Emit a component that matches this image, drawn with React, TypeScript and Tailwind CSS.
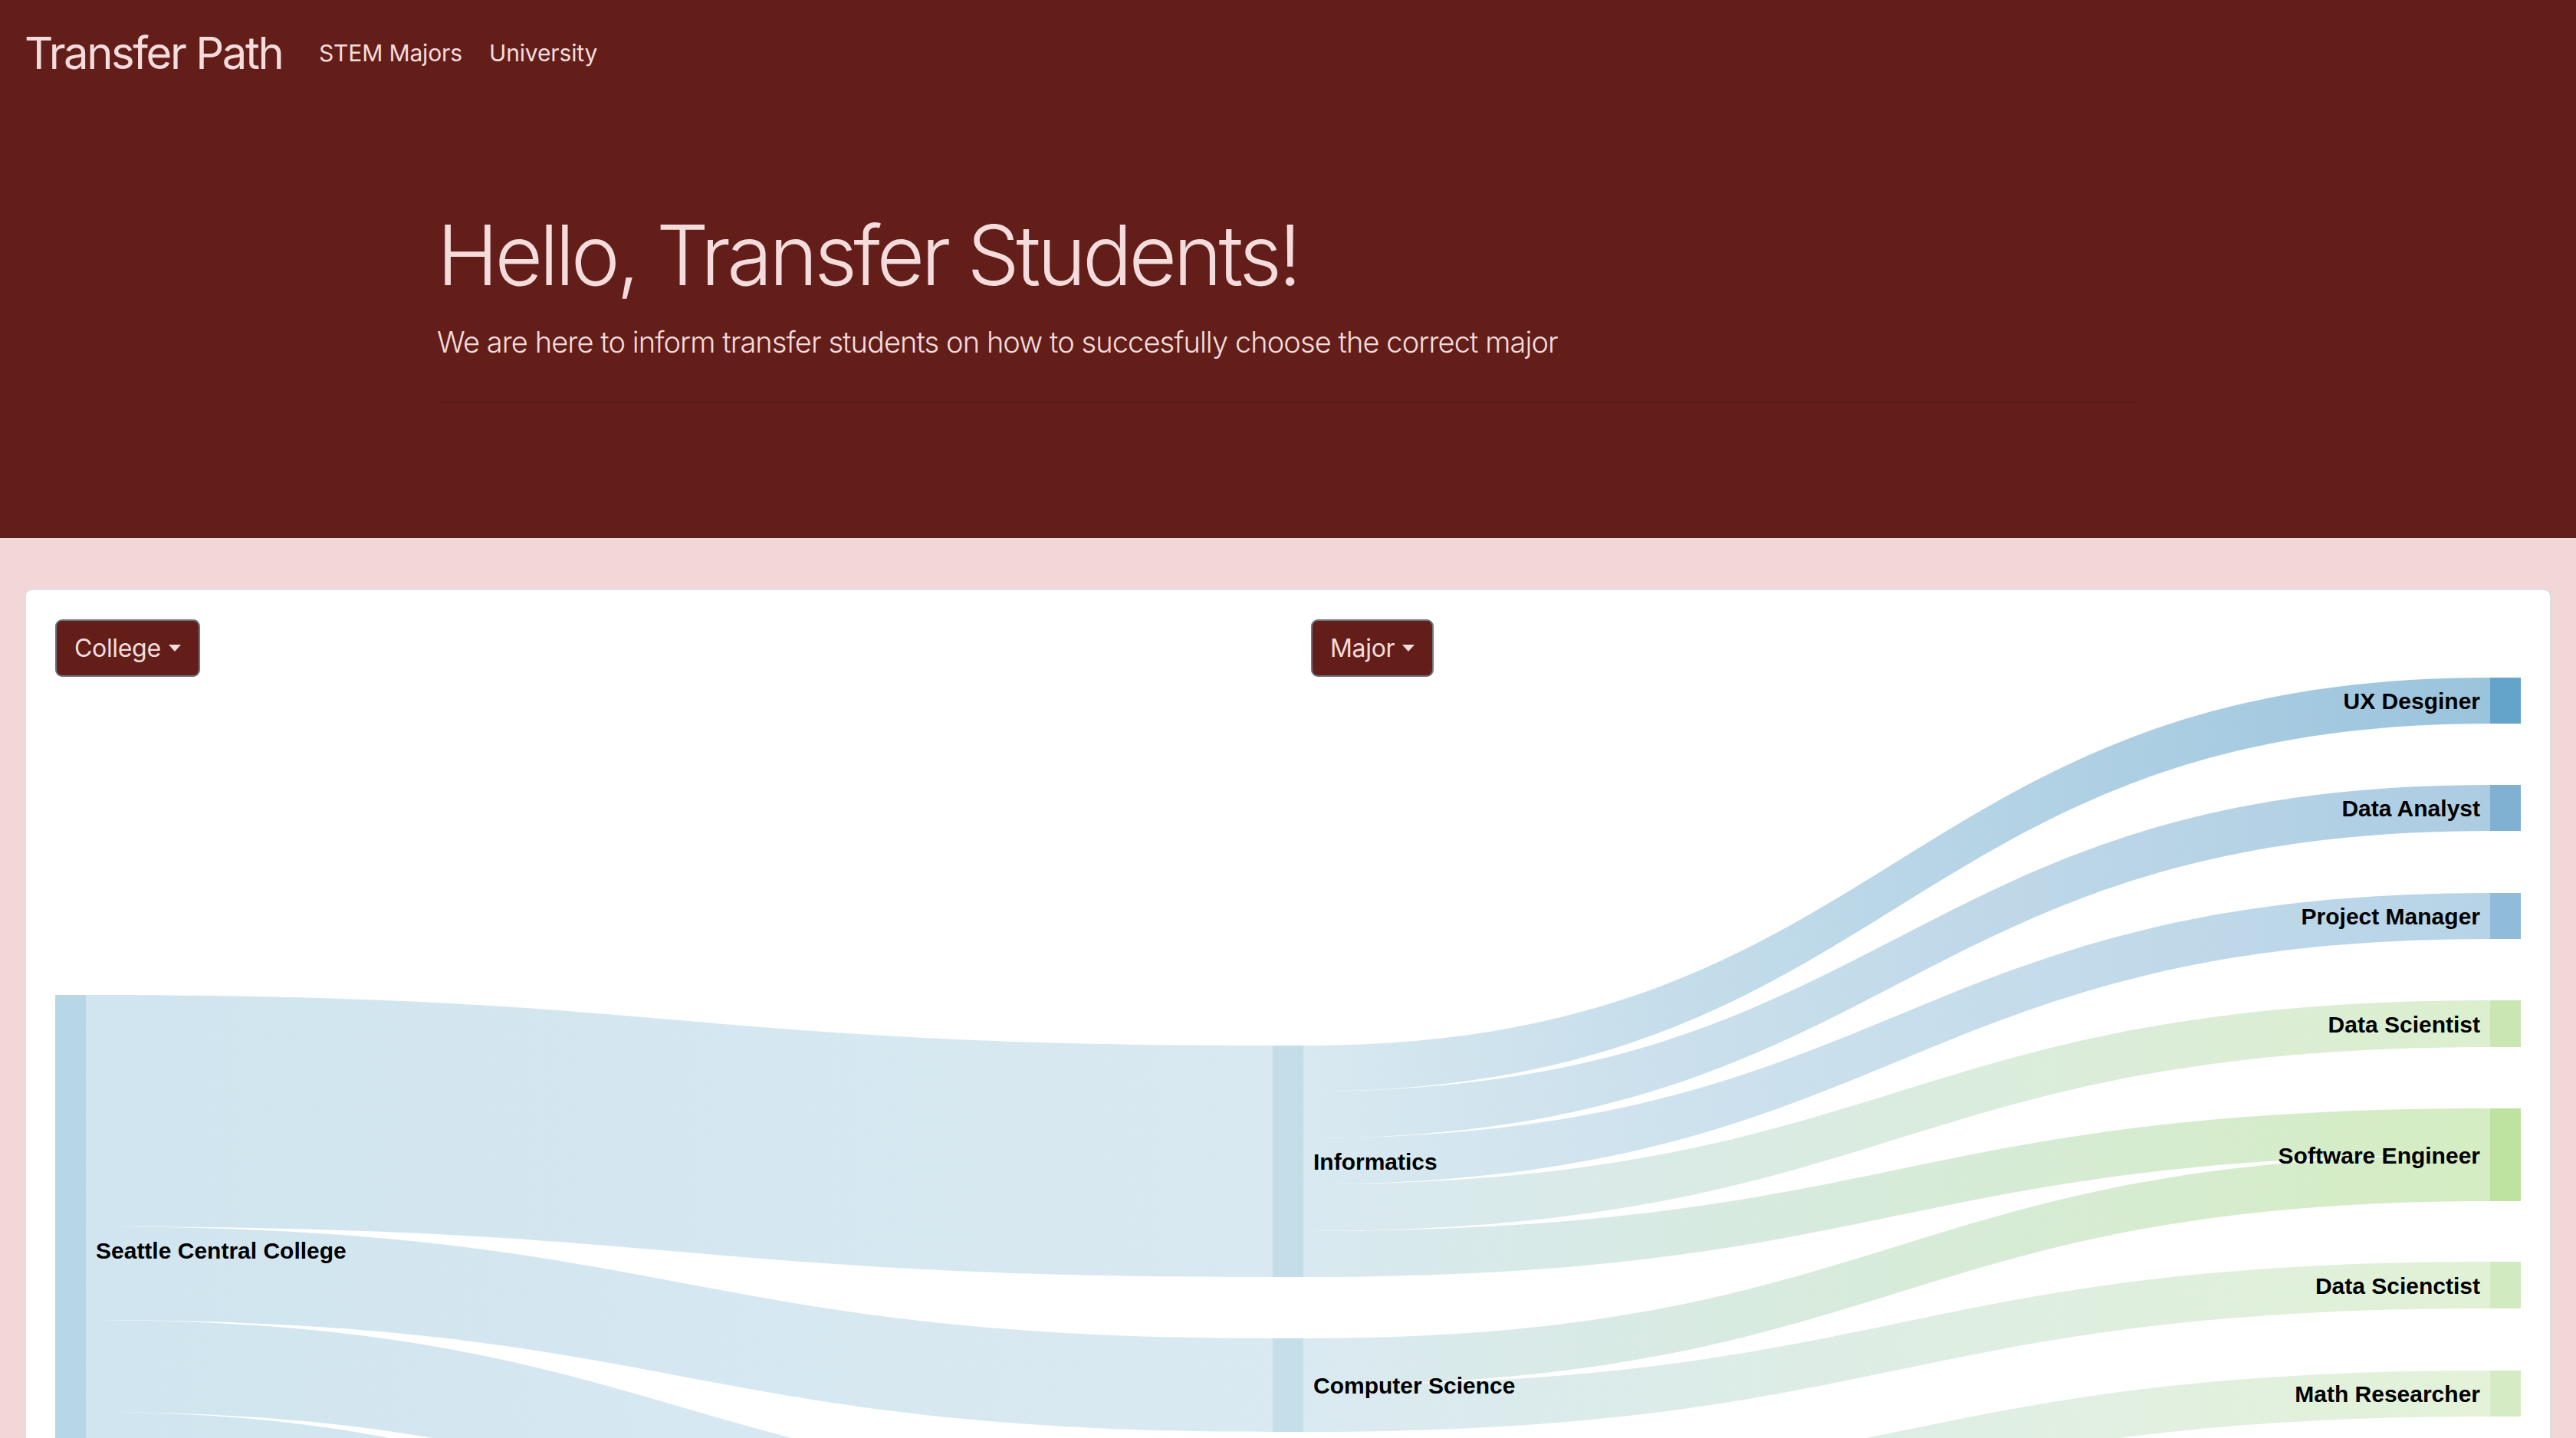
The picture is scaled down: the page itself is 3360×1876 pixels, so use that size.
import React from "react";

type Node = { id: string; x: number; y0: number; y1: number; color: string; label: string; side: "l" | "m" | "r" };
type Link = { s: string; t: string; a0: number; a1: number; b0: number; b1: number };

const OX = 72;
const OY = 883;
const NW = 40;
const XL = 72;
const XM = 1660;
const XR = 3248;

const nodes: Node[] = [
  { id: "sc", x: XL, y0: 1298, y1: 1964, color: "#b7d7e7", label: "Seattle Central College", side: "l" },
  { id: "inf", x: XM, y0: 1364, y1: 1666, color: "#c4dde9", label: "Informatics", side: "m" },
  { id: "cs", x: XM, y0: 1746, y1: 1868, color: "#c6deea", label: "Computer Science", side: "m" },
  { id: "math", x: XM, y0: 1948, y1: 2068, color: "#c9e0ec", label: "", side: "m" },
  { id: "eng", x: XM, y0: 2148, y1: 2270, color: "#c9e0ec", label: "", side: "m" },
  { id: "ux", x: XR, y0: 884, y1: 944, color: "#64a4cb", label: "UX Desginer", side: "r" },
  { id: "da", x: XR, y0: 1024, y1: 1084, color: "#80b1d3", label: "Data Analyst", side: "r" },
  { id: "pm", x: XR, y0: 1165, y1: 1225, color: "#90bcda", label: "Project Manager", side: "r" },
  { id: "ds", x: XR, y0: 1305, y1: 1366, color: "#c9e6b3", label: "Data Scientist", side: "r" },
  { id: "se", x: XR, y0: 1446, y1: 1567, color: "#bee3a1", label: "Software Engineer", side: "r" },
  { id: "dsc", x: XR, y0: 1646, y1: 1707, color: "#d1eabf", label: "Data Scienctist", side: "r" },
  { id: "mr", x: XR, y0: 1788, y1: 1848, color: "#d4ebc3", label: "Math Researcher", side: "r" },
  { id: "st", x: XR, y0: 1928, y1: 1988, color: "#d7edc8", label: "", side: "r" },
  { id: "me", x: XR, y0: 2068, y1: 2190, color: "#d9eecb", label: "", side: "r" },
];

const links: Link[] = [
  { s: "sc", t: "inf", a0: 1298, a1: 1600, b0: 1364, b1: 1666 },
  { s: "sc", t: "cs", a0: 1600, a1: 1722, b0: 1746, b1: 1868 },
  { s: "sc", t: "math", a0: 1722, a1: 1842, b0: 1948, b1: 2068 },
  { s: "sc", t: "eng", a0: 1842, a1: 1964, b0: 2148, b1: 2270 },
  { s: "inf", t: "ux", a0: 1364, a1: 1424, b0: 884, b1: 944 },
  { s: "inf", t: "da", a0: 1424, a1: 1485, b0: 1024, b1: 1084 },
  { s: "inf", t: "pm", a0: 1485, a1: 1545, b0: 1165, b1: 1225 },
  { s: "inf", t: "ds", a0: 1545, a1: 1606, b0: 1305, b1: 1366 },
  { s: "inf", t: "se", a0: 1606, a1: 1666, b0: 1446, b1: 1506 },
  { s: "cs", t: "se", a0: 1746, a1: 1807, b0: 1506, b1: 1567 },
  { s: "cs", t: "dsc", a0: 1807, a1: 1868, b0: 1646, b1: 1707 },
  { s: "math", t: "mr", a0: 1948, a1: 2008, b0: 1788, b1: 1848 },
  { s: "math", t: "st", a0: 2008, a1: 2068, b0: 1928, b1: 1988 },
  { s: "eng", t: "me", a0: 2148, a1: 2270, b0: 2068, b1: 2190 },
];

const byId = (id: string) => nodes.find((n) => n.id === id)!;

function linkPath(l: Link) {
  const s = byId(l.s);
  const t = byId(l.t);
  const x0 = s.x + NW - OX;
  const x1 = t.x - OX;
  const xm = (x0 + x1) / 2;
  const a0 = l.a0 - OY;
  const a1 = l.a1 - OY;
  const b0 = l.b0 - OY;
  const b1 = l.b1 - OY;
  return `M${x0},${a0} C${xm},${a0} ${xm},${b0} ${x1},${b0} L${x1},${b1} C${xm},${b1} ${xm},${a1} ${x0},${a1} Z`;
}

function Sankey() {
  return (
    <svg width={3216} height={1420} viewBox="0 0 3216 1420" className="block">
      <defs>
        {links.map((l, i) => {
          const s = byId(l.s);
          const t = byId(l.t);
          return (
            <linearGradient
              key={i}
              id={`g${i}`}
              gradientUnits="userSpaceOnUse"
              x1={s.x + NW - OX}
              y1={0}
              x2={t.x - OX}
              y2={0}
            >
              <stop offset="0%" stopColor={s.color} />
              <stop offset="100%" stopColor={t.color} />
            </linearGradient>
          );
        })}
      </defs>
      {links.map((l, i) => (
        <path key={i} d={linkPath(l)} fill={`url(#g${i})`} fillOpacity={0.65} />
      ))}
      {nodes.map((n) => (
        <rect key={n.id} x={n.x - OX} y={n.y0 - OY} width={NW} height={n.y1 - n.y0} fill={n.color} />
      ))}
      {nodes
        .filter((n) => n.label)
        .map((n) => {
          const cy = (n.y0 + n.y1) / 2 - OY + 11;
          const x = n.side === "r" ? n.x - OX - 13 : n.x - OX + NW + 13;
          return (
            <text
              key={n.id + "t"}
              x={x}
              y={cy}
              textAnchor={n.side === "r" ? "end" : "start"}
              fontFamily="'Liberation Sans', Arial, sans-serif"
              fontWeight={700}
              fontSize={30}
              fill="#000"
            >
              {n.label}
            </text>
          );
        })}
    </svg>
  );
}

function DropButton({ label }: { label: string }) {
  return (
    <button className="flex h-[75px] items-center rounded-[9px] border-2 border-[#6c757d] bg-[#631e1a] px-[23px] text-[32px] leading-[48px] tracking-[-0.01em] text-[#f4dcdc]">
      <span>{label}</span>
      <span className="ml-[10px] inline-block h-0 w-0 border-x-[8px] border-t-[9px] border-x-transparent border-t-[#f4dcdc]" />
    </button>
  );
}

export default function App() {
  return (
    <div className="min-h-screen bg-[#f2d7d8] font-['Inter','Noto_Sans',sans-serif]">
      <header className="h-[702px] bg-[#631e1a] text-[#f4dcdc]">
        <nav className="flex items-center px-[32px] pt-[33px]">
          <span className="w-[336px] shrink-0 whitespace-nowrap text-[58px] leading-[72px] tracking-[-0.042em]">
            Transfer Path
          </span>
          <div className="ml-[48px] flex items-center gap-[32px] text-[30px] leading-[48px] tracking-[-0.005em]">
            <span className="w-[190px] whitespace-nowrap">STEM Majors</span>
            <span className="whitespace-nowrap">University</span>
          </div>
        </nav>
        <div className="mx-auto w-[2220px] pt-[161px]">
          <h1 className="whitespace-nowrap text-[108px] font-light leading-[134px] tracking-[-0.042em]">
            Hello, Transfer Students!
          </h1>
          <p className="mt-[16px] whitespace-nowrap text-[38px] font-light leading-[60px] tracking-[-0.024em]">
            We are here to inform transfer students on how to succesfully choose the correct major
          </p>
          <hr className="mt-[48px] border-0 border-t-2 border-black/10" />
        </div>
      </header>
      <main className="px-[32px] pt-[66px]">
        <div className="rounded-[10px] border-2 border-[#dfdfdf] bg-white px-[38px] pt-[38px]">
          <div className="grid grid-cols-2 gap-[60px]">
            <div>
              <DropButton label="College" />
            </div>
            <div>
              <DropButton label="Major" />
            </div>
          </div>
          <Sankey />
        </div>
      </main>
    </div>
  );
}
